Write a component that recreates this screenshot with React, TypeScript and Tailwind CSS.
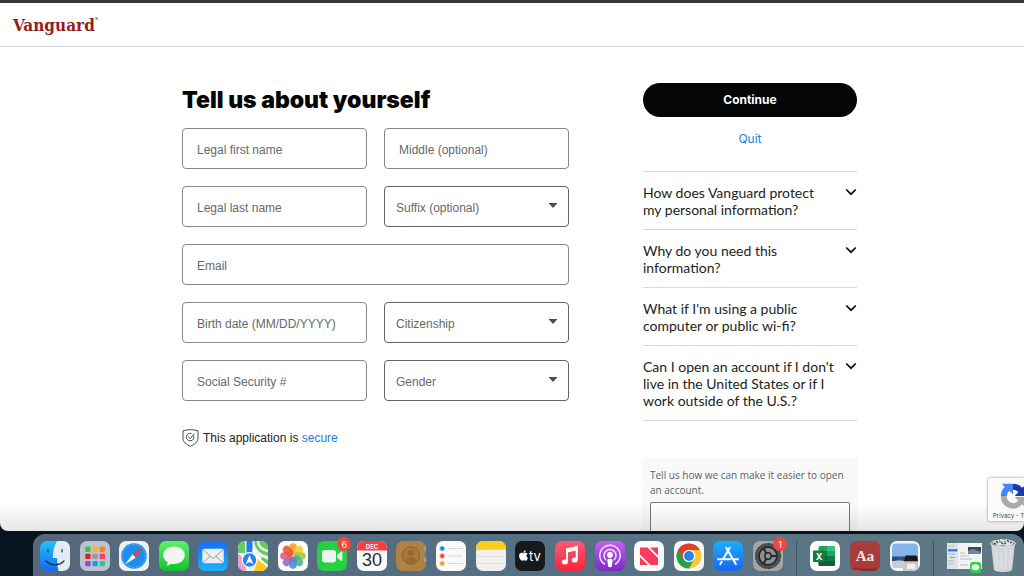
import { useState } from "react";
import type { ReactNode } from "react";
import { FaApple } from "react-icons/fa";

const questions = [
    "How does Vanguard protect my personal information?",
    "Why do you need this information?",
    "What if I'm using a public computer or public wi-fi?",
    "Can I open an account if I don't live in the United States or if I work outside of the U.S.?",
];

type FieldProps = {
    name: string;
    label: string;
    wide?: boolean;
};

const TextField = ({ name, label, wide }: FieldProps) => {
    const [value, setValue] = useState("");

    return (
        <div className={wide ? "relative col-span-2" : "relative"}>
            <input
                id={name}
                name={name}
                type="text"
                value={value}
                onChange={(e) => setValue(e.target.value)}
                className="block h-[41px] w-full rounded border border-[#85878a] bg-white px-[14px] pt-3 text-xs text-[#333] focus:outline-none"
            />
            <label
                htmlFor={name}
                className={
                    value
                        ? "absolute top-1 left-[15px] text-[9px] leading-3 text-[#66686a]"
                        : "absolute top-[14px] left-[15px] text-xs leading-4 text-[#66686a]"
                }
            >
                {label}
            </label>
        </div>
    );
};

const SelectField = ({ name, label }: FieldProps) => {
    return (
        <div className="relative">
            <select
                id={name}
                name={name}
                className="block h-[41px] w-full appearance-none rounded border border-[#606264] bg-white px-[11px] text-xs focus:outline-none"
            />
            <label
                htmlFor={name}
                className="pointer-events-none absolute top-[14px] left-3 text-xs leading-4 text-[#66686a]"
            >
                {label}
            </label>
            <svg
                viewBox="0 0 10 5"
                className="pointer-events-none absolute top-[17px] right-[11px] h-[5px] w-[10px]"
            >
                <path d="M0.5 0h9L5 5z" fill="#4a4c4e" />
            </svg>
        </div>
    );
};

const Question = ({ text }: { text: string }) => {
    const [open, setOpen] = useState(false);

    return (
        <button
            type="button"
            aria-expanded={open}
            onClick={() => setOpen(!open)}
            className="flex w-full items-start justify-between border-t border-[#d8d9da] pt-3 pb-[11px] text-left font-['Lato',sans-serif] text-sm leading-[17px] text-[#1c1e20]"
        >
            <span className="w-[192px]">{text}</span>
            <svg
                viewBox="0 0 12 8"
                className={open ? "mt-1 h-2 w-3 rotate-180" : "mt-1 h-2 w-3"}
            >
                <path
                    d="M1.2 1.5L6 6.2l4.8-4.7"
                    fill="none"
                    stroke="#0b0c0d"
                    strokeWidth="1.7"
                />
            </svg>
        </button>
    );
};

const ShieldIcon = () => (
    <svg viewBox="0 0 17 18" className="h-[18px] w-[17px]" fill="none" stroke="#45484b">
        <path d="M8.5 0.7C6 0.7 3.2 1 1 1.8v7.4c0 3.6 3.2 6.3 7.5 8 4.3-1.7 7.5-4.4 7.500-8V1.8C13.8 1 11 .7 8.5.7z" />
        <path d="M11.7 6.7a3.800 3.800 0 1 1-2.200-2.200" />
        <path d="M6.400 7.700l1.800 1.900 4.200-5" />
    </svg>
);

const RecaptchaIcon = () => (
    <svg viewBox="0 0 32 32" className="h-7 w-7">
        <path d="M16 2A14 14 0 0 1 26.5 6.700L30 3.500V16H18l4-4.200A7 7 0 0 0 16 9z" fill="#1c3aa9" />
        <path d="M2 16A14 14 0 0 1 6.500 6L3.300 2H16v12l-4.200-4A7.500 7.500 0 0 0 9 16z" fill="#4285f4" />
        <path d="M2 16a14 14 0 0 0 24.500 9.500L30 29V17H18l4 4.500a7.500 7.500 0 0 1-13-5.500z" fill="#ababab" />
    </svg>
);

type DockItem = {
    name: string;
    badge?: string;
    icon: ReactNode;
};

const petals = [
    { angle: 0, color: "#f7a21b" },
    { angle: 45, color: "#f4cf2c" },
    { angle: 90, color: "#9ccb4a" },
    { angle: 135, color: "#4fb58c" },
    { angle: 180, color: "#4f8fd0" },
    { angle: 225, color: "#8f6fc0" },
    { angle: 270, color: "#d8608c" },
    { angle: 315, color: "#f0543a" },
];

const launchColors = [
    "#2fc653", "#fdb414", "#fb8412",
    "#d3262d", "#989ba1", "#fb3e62",
    "#9a43d6", "#159cf5", "#2bca86",
];

const apps: DockItem[] = [
    {
        name: "Finder",
        icon: (
            <>
                <defs>
                    <linearGradient id="finder" x1="0" y1="0" x2="0" y2="1">
                        <stop offset="0" stopColor="#1fc4fd" />
                        <stop offset="1" stopColor="#1568ee" />
                    </linearGradient>
                </defs>
                <rect width="30" height="30" fill="url(#finder)" />
                <path d="M17 0C14 5 12.800 11 12.800 17h4.300c0 5 .400 9 1.400 13H30V0z" fill="#e4ebf3" />
                <path d="M8 8.500v2.500M22 8.500v2.500M6 20c5 5 13 5 18 0" stroke="#17324f" strokeWidth="1.200" fill="none" strokeLinecap="round" />
            </>
        ),
    },
    {
        name: "Launchpad",
        icon: (
            <>
                <rect width="30" height="30" fill="#bcc3ce" />
                {launchColors.map((color, i) => (
                    <rect
                        key={color}
                        x={5.2 + (i % 3) * 7.2}
                        y={5.5 + Math.floor(i / 3) * 7.2}
                        width="5.4"
                        height="5.4"
                        rx="1.2"
                        fill={color}
                    />
                ))}
            </>
        ),
    },
    {
        name: "Safari",
        icon: (
            <>
                <rect width="30" height="30" fill="#eef0f2" />
                <circle cx="15" cy="15" r="12.800" fill="#1f8df0" />
                <circle cx="15" cy="15" r="11.500" fill="none" stroke="#8dc8fb" strokeWidth="1.200" strokeDasharray="0.500 1.200" />
                <path d="M24 6.500L13.500 13.200l3.200 3.500z" fill="#f23c34" />
                <path d="M6 23.500l7.500-10.300 3.200 3.500z" fill="#f5f7fa" />
            </>
        ),
    },
    {
        name: "Messages",
        icon: (
            <>
                <defs>
                    <linearGradient id="messages" x1="0" y1="0" x2="0" y2="1">
                        <stop offset="0" stopColor="#5cf36b" />
                        <stop offset="1" stopColor="#10c22c" />
                    </linearGradient>
                </defs>
                <rect width="30" height="30" fill="url(#messages)" />
                <path d="M15 5.500c-6 0-10.800 3.800-10.800 8.700 0 3 1.800 5.600 4.600 7.100 0 1.300-.500 2.400-1.500 3.300 1.900 0 3.500-.700 4.700-1.900 1 .200 2 .300 3 .300 6 0 10.800-3.900 10.800-8.800S21 5.500 15 5.500z" fill="#f1f4f1" />
            </>
        ),
    },
    {
        name: "Mail",
        icon: (
            <>
                <defs>
                    <linearGradient id="mail" x1="0" y1="0" x2="0" y2="1">
                        <stop offset="0" stopColor="#1a6cf2" />
                        <stop offset="1" stopColor="#18b4fa" />
                    </linearGradient>
                </defs>
                <rect width="30" height="30" fill="url(#mail)" />
                <rect x="4.300" y="7.700" width="21.400" height="14.600" rx="1.800" fill="#eceff2" />
                <path d="M5 8.500l8.700 8.200c.800.700 1.800.700 2.600 0L25 8.500M5 21.800l7.200-6.600M25 21.800l-7.200-6.600" fill="none" stroke="#8d959d" strokeWidth="0.900" />
            </>
        ),
    },
    {
        name: "Maps",
        icon: (
            <>
                <rect width="30" height="30" fill="#f0efe9" />
                <path d="M16 0h14v15C22 13 17 8 16 0z" fill="#5fcb59" />
                <path d="M20 0c0 5 4 9 10 10" fill="none" stroke="#e8ece9" strokeWidth="2.500" />
                <path d="M0 13c5 2 8 8 8 17H0z" fill="#eb9fce" />
                <path d="M20 18l10 8v4H16z" fill="#fdc91b" />
                <path d="M24 16l6 3v7l-8-6z" fill="#61c95b" />
                <path d="M0 0h7v12H0z" fill="#65cc60" />
                <path d="M8.500 0h6v13h-6z" fill="#1e7cf2" />
                <path d="M15 9c3 7 9 12 16 17" fill="none" stroke="#fff" strokeWidth="2" />
                <circle cx="11.500" cy="19" r="7.300" fill="#2384f5" stroke="#fff" strokeWidth="1.200" />
                <path d="M11.500 14l3.800 9.200-3.800-2.200-3.800 2.200z" fill="#fff" />
            </>
        ),
    },
    {
        name: "Photos",
        icon: (
            <>
                <rect width="30" height="30" fill="#fdfdfd" />
                {petals.map((petal) => (
                    <rect
                        key={petal.angle}
                        x="11.200"
                        y="2.200"
                        width="7.600"
                        height="12"
                        rx="3.800"
                        fill={petal.color}
                        opacity="0.900"
                        transform={`rotate(${petal.angle} 15 15)`}
                    />
                ))}
            </>
        ),
    },
    {
        name: "FaceTime",
        badge: "6",
        icon: (
            <>
                <rect width="30" height="30" fill="#27cf42" />
                <rect x="5" y="9" width="14" height="12.500" rx="3" fill="#f0f4ef" />
                <path d="M20 14l4-3.300c.700-.500 1.400-.200 1.400.600v7.900c0 .800-.700 1.100-1.400.600L20 16.500z" fill="#e8efe8" />
            </>
        ),
    },
    {
        name: "Calendar",
        icon: (
            <>
                <rect width="30" height="30" fill="#fafafa" />
                <rect width="30" height="9.500" fill="#f5413d" />
                <text x="15" y="7.500" textAnchor="middle" fontSize="6" fill="#fff" className="font-['Inter',sans-serif] font-semibold">DEC</text>
                <text x="15" y="25" textAnchor="middle" fontSize="18" fill="#2c2c2e" className="font-['Liberation_Sans',sans-serif]">30</text>
            </>
        ),
    },
    {
        name: "Contacts",
        icon: (
            <>
                <rect width="30" height="30" fill="#b08142" />
                <path d="M28.500 5h1.500v5h-1.500z" fill="#9aa0a4" />
                <path d="M28.500 11h1.500v5h-1.500z" fill="#2f8fe0" />
                <path d="M28.500 17h1.500v4h-1.500z" fill="#f5a623" />
                <path d="M28.500 22h1.500v4h-1.500z" fill="#36b950" />
                <circle cx="15" cy="14.500" r="8.700" fill="#a97a3c" stroke="#866029" strokeWidth="1" />
                <circle cx="15" cy="11.800" r="3.200" fill="#986c31" />
                <path d="M9 20.500c1-3.200 3.200-4.500 6-4.500s5 1.300 6 4.500c-3.500 3-8.500 3-12 0z" fill="#986c31" />
            </>
        ),
    },
    {
        name: "Reminders",
        icon: (
            <>
                <rect width="30" height="30" fill="#fafafa" />
                <path d="M11.500 7.500h15M11.500 15h15M11.500 22.500h15" stroke="#c9cbcd" strokeWidth="0.800" />
                <circle cx="6.200" cy="7.500" r="2.400" fill="#1b7df0" stroke="#b5d4f6" strokeWidth="0.800" />
                <circle cx="6.200" cy="15" r="2.400" fill="#f0413d" stroke="#f8c0be" strokeWidth="0.800" />
                <circle cx="6.200" cy="22.500" r="2.400" fill="#f79a1c" stroke="#fadbb0" strokeWidth="0.800" />
            </>
        ),
    },
    {
        name: "Notes",
        icon: (
            <>
                <rect width="30" height="30" fill="#f2f1ef" />
                <rect width="30" height="8" fill="#fdcb1e" />
                <path d="M0 8.600h30" stroke="#b9b3a1" strokeDasharray="1 0.800" />
                <path d="M0 15.500h30M0 22.500h30" stroke="#d6d5d3" strokeWidth="0.600" />
            </>
        ),
    },
    {
        name: "TV",
        icon: (
            <>
                <rect width="30" height="30" fill="#17191b" />
                <FaApple x="2.500" y="8.500" size="12" color="#fff" />
                <text x="14" y="19.800" fontSize="13" fill="#fff" className="font-['Inter',sans-serif]">tv</text>
            </>
        ),
    },
    {
        name: "Music",
        icon: (
            <>
                <defs>
                    <linearGradient id="music" x1="0" y1="0" x2="0" y2="1">
                        <stop offset="0" stopColor="#fb5c74" />
                        <stop offset="1" stopColor="#fa233b" />
                    </linearGradient>
                </defs>
                <rect width="30" height="30" fill="url(#music)" />
                <path d="M12 20.500V8.200L21.800 6v12.500M12 10.500l9.800-2.200" fill="none" stroke="#fff" strokeWidth="2" />
                <ellipse cx="9.900" cy="21" rx="3" ry="2.500" fill="#fff" />
                <ellipse cx="19.700" cy="19" rx="3" ry="2.500" fill="#fff" />
            </>
        ),
    },
    {
        name: "Podcasts",
        icon: (
            <>
                <defs>
                    <linearGradient id="podcasts" x1="0" y1="0" x2="0" y2="1">
                        <stop offset="0" stopColor="#c95ef0" />
                        <stop offset="1" stopColor="#7a2ac4" />
                    </linearGradient>
                </defs>
                <rect width="30" height="30" fill="url(#podcasts)" />
                <path d="M9.500 23a10.200 10.200 0 1 1 11 0M10.800 18.800a6 6 0 1 1 8.400 0" fill="none" stroke="#f3e4fb" strokeWidth="1.500" strokeLinecap="round" />
                <circle cx="15" cy="14" r="2.900" fill="#fff" />
                <path d="M12.300 19.500c0-1.300 1.200-1.800 2.700-1.800s2.700.500 2.700 1.800l-.800 5.200c-.200 1-.800 1.500-1.900 1.500s-1.700-.500-1.900-1.500z" fill="#fff" />
            </>
        ),
    },
    {
        name: "News",
        icon: (
            <>
                <rect width="30" height="30" fill="#fcfcfc" />
                <path d="M6 6.500h7.500L24 17v7h-7.500L6 13.500z" fill="#fb3b5c" />
                <path d="M16 6.500h8v8zM6 16l8 8H6z" fill="#fb3b5c" />
            </>
        ),
    },
    {
        name: "Chrome",
        icon: (
            <>
                <rect width="30" height="30" fill="#f6f7f8" />
                <circle cx="15" cy="15" r="12.500" fill="#fcc934" />
                <path d="M4.200 8.700A12.500 12.500 0 0 0 15 27.500L20.400 18z" fill="#27a049" />
                <path d="M4.200 8.700L9.600 18l5.400-9h10.900A12.500 12.500 0 0 0 4.200 8.700z" fill="#e33b2e" />
                <circle cx="15" cy="15" r="6.200" fill="#fff" />
                <circle cx="15" cy="15" r="4.900" fill="#2f7de8" />
            </>
        ),
    },
    {
        name: "App Store",
        icon: (
            <>
                <defs>
                    <linearGradient id="store" x1="0" y1="0" x2="0" y2="1">
                        <stop offset="0" stopColor="#1ab0fb" />
                        <stop offset="1" stopColor="#1a66ef" />
                    </linearGradient>
                </defs>
                <rect width="30" height="30" fill="url(#store)" />
                <path d="M16.800 6.800L10.200 18M13.200 6.800l9.600 16.300M5 18.300h12.500M21.300 18.300H25M8.600 20.900l-1.300 2.200" fill="none" stroke="#fff" strokeWidth="2" strokeLinecap="round" />
            </>
        ),
    },
    {
        name: "System Preferences",
        badge: "1",
        icon: (
            <>
                <rect width="30" height="30" fill="#a3a6a8" />
                <circle cx="15" cy="15" r="12.300" fill="#55585a" stroke="#303234" strokeWidth="1.500" strokeDasharray="1.200 0.600" />
                <circle cx="15" cy="15" r="9" fill="#8d9092" stroke="#252729" strokeWidth="1.800" />
                <path d="M15 15L23.500 15M15 15L10.500 7.500M15 15l-4.500 7.500" stroke="#252729" strokeWidth="2" />
                <circle cx="15" cy="15" r="3.200" fill="#8d9092" stroke="#252729" strokeWidth="1.500" />
            </>
        ),
    },
];

const recent: DockItem[] = [
    {
        name: "Excel",
        icon: (
            <>
                <rect width="30" height="30" fill="#fbfcfb" />
                <rect x="8.500" y="5" width="16.500" height="20" rx="1.500" fill="#21a366" />
                <path d="M8.500 10H17v5H8.500z" fill="#107c41" />
                <path d="M17 5h6.500a1.500 1.500 0 0 1 1.500 1.500V10h-8z" fill="#33c481" />
                <path d="M8.500 15H25v8.500a1.500 1.500 0 0 1-1.500 1.500H10a1.500 1.500 0 0 1-1.500-1.500z" fill="#185c37" />
                <path d="M17 15h8v5h-8z" fill="#107c41" />
                <rect x="3" y="9.500" width="12" height="11.500" rx="1" fill="#107c41" />
                <text x="9" y="18.500" textAnchor="middle" fontSize="9" fill="#fff" className="font-['Inter',sans-serif] font-bold">X</text>
            </>
        ),
    },
    {
        name: "Dictionary",
        icon: (
            <>
                <rect width="30" height="30" fill="#a73c3b" />
                <path d="M0 27.500h30V30H0z" fill="#8a2e2e" />
                <path d="M3 29h7v1H3z" fill="#f23a30" />
                <text x="15" y="19.800" textAnchor="middle" fontSize="15" fill="#f3e6e4" className="font-['Liberation_Serif',serif] font-bold">Aa</text>
            </>
        ),
    },
    {
        name: "Preview",
        icon: (
            <>
                <rect width="30" height="30" fill="#f4f6f8" />
                <rect x="2" y="2.500" width="26" height="24.500" rx="4" fill="#86b5ec" />
                <path d="M2 15.500h26V20H2z" fill="#2f4c86" />
                <path d="M2 20h26v4c0 2-1.500 3-3 3H5c-2 0-3-1.500-3-3z" fill="#c3cfdb" />
                <path d="M4 20l5-1.500L14 20z" fill="#8797ab" />
                <path d="M15.500 14.500h11l1.500 6H14z" fill="#17191b" />
                <path d="M14.500 20.500h13L29 30H12.500z" fill="#c8cac9" />
                <path d="M17.500 23h7.500l.700 5h-9z" fill="#f0f1ef" />
            </>
        ),
    },
];

const DockIcon = ({ item }: { item: DockItem }) => (
    <button type="button" aria-label={item.name} className="relative size-[30px] shrink-0">
        <svg viewBox="0 0 30 30" className="size-[30px] rounded-[7px]">
            {item.icon}
        </svg>
        {item.badge && (
            <span className="absolute -top-1 -right-1 flex size-[14px] items-center justify-center rounded-full bg-[#f2453c] text-[9px] leading-none text-white">
                {item.badge}
            </span>
        )}
    </button>
);

const Dock = () => (
    <nav
        aria-label="Dock"
        className="mt-[3px] ml-[33px] flex h-[42px] gap-[13px] rounded-t-xl bg-linear-to-r from-[#56677b] via-[#557084] to-[#5f7984] px-[7px] pt-[7px]"
    >
        <div className="flex flex-1 justify-between">
            {apps.map((item) => (
                <DockIcon key={item.name} item={item} />
            ))}
        </div>
        <div className="w-px bg-[#40535f]" />
        <div className="flex gap-[10px]">
            {recent.map((item) => (
                <DockIcon key={item.name} item={item} />
            ))}
        </div>
        <div className="w-px bg-[#40535f]" />
        <div className="flex gap-[6px]">
            <button type="button" aria-label="Messages window" className="h-8 w-9">
                <svg viewBox="0 0 36 32" className="h-8 w-9">
                    <rect y="2" width="35" height="26" fill="#f3f4f5" />
                    <path d="M0 2h11v26H0z" fill="#dfe3e7" />
                    <path d="M1 8h9.500v2.500H1z" fill="#2b84f0" />
                    <path d="M1 5h6M1 13h7M1 20h7M1 23h6M13 12h5M13 15h9M13 18h12M13 24h8" stroke="#b2b8be" strokeWidth="0.900" />
                    <path d="M3 16.500h5" stroke="#ec7a7a" strokeWidth="1" />
                    <path d="M21 6h13v7H21z" fill="#394b5a" />
                    <path d="M21 10l5-2 8 3v2H21z" fill="#71889a" />
                    <rect x="23" y="21" width="11" height="11" rx="2.500" fill="#2fd34b" />
                    <ellipse cx="28.500" cy="26.200" rx="3.700" ry="3" fill="#f3f6f3" />
                </svg>
            </button>
            <button type="button" aria-label="Trash" className="-mt-1 h-9 w-7">
                <svg viewBox="0 0 28 36" className="h-9 w-7">
                    <path d="M2 6l2.800 26c.300 2 3 3 9.200 3s8.900-1 9.200-3L26 6z" fill="#d3d6d7" />
                    <path d="M7 12l1 19M12 14l.500 18M17 12l-.500 20M22 12l-1.500 18" stroke="#dee1e1" strokeWidth="1.500" />
                    <ellipse cx="14" cy="6.500" rx="12.500" ry="3.500" fill="#8b9498" stroke="#e5e8e8" strokeWidth="1" />
                    <path d="M4 6l2-3 3 1 3-2 3 1 4-1 2 2 3 1-1 3-5 1-4-1-5 1z" fill="#dfe2e2" />
                    <path d="M7 4l2 2M18 3l2 2M12 5l2 2M21 6l2-1M5 6l2 1M15 7l2-1" stroke="#3c4a50" strokeWidth="1.200" />
                    <path d="M10 4l1.500 1" stroke="#3d7fc4" strokeWidth="1.200" />
                    <path d="M15 4l1.500 1" stroke="#c9574a" strokeWidth="1.200" />
                </svg>
            </button>
        </div>
    </nav>
);

const App = () => {
    return (
        <div className="flex h-screen flex-col overflow-hidden bg-[#07131f] font-['Inter',sans-serif]">
            <div className="relative flex min-h-0 flex-1 flex-col overflow-hidden rounded-b-lg border-t-[3px] border-[#37353d] bg-white">
                <header className="flex h-11 shrink-0 items-center border-b border-[#d8d8d9] px-[13px]">
                    <a
                        href="#"
                        className="flex items-start font-['DejaVu_Serif_Condensed','DejaVu_Serif',serif] text-[17px] leading-6 font-bold text-[#981b1e]"
                    >
                        Vanguard
                        <span className="text-[4px] leading-3">®</span>
                    </a>
                </header>

                <main className="pt-9 pl-[15px]">
                    <div className="mx-auto flex max-w-[675px] justify-between">
                        <form className="w-[387px]">
                            <h1 className="pb-[11px] text-[23px] leading-[34px] font-black text-[#040505]">
                                Tell us about yourself
                            </h1>
                            <div className="grid grid-cols-2 gap-[17px] font-['Liberation_Sans',sans-serif]">
                                <TextField name="first_name" label="Legal first name" />
                                <TextField name="middle_name" label="Middle (optional)" />
                                <TextField name="last_name" label="Legal last name" />
                                <SelectField name="suffix" label="Suffix (optional)" />
                                <TextField name="email" label="Email" wide />
                                <TextField name="birth_date" label="Birth date (MM/DD/YYYY)" />
                                <SelectField name="citizenship" label="Citizenship" />
                                <TextField name="ssn" label="Social Security #" />
                                <SelectField name="gender" label="Gender" />
                            </div>
                            <p className="mt-7 flex items-center gap-1 font-['Liberation_Sans',sans-serif] text-xs text-[#1c1e20]">
                                <ShieldIcon />
                                <span>
                                    This application is{" "}
                                    <a href="#" className="text-[#1a7fd4]">
                                        secure
                                    </a>
                                </span>
                            </p>
                        </form>

                        <aside className="w-[214px]">
                            <button
                                type="button"
                                className="block h-[34px] w-full rounded-full bg-[#040505] text-xs font-bold text-white"
                            >
                                Continue
                            </button>
                            <a
                                href="#"
                                className="mt-[14px] mb-6 block text-center text-xs text-[#1a7fd4]"
                            >
                                Quit
                            </a>
                            <div className="border-b border-[#d8d9da]">
                                {questions.map((text) => (
                                    <Question key={text} text={text} />
                                ))}
                            </div>
                            <div className="mt-9 rounded bg-[#f9f9f9] px-[7px] pt-[11px] pb-4 font-['Open_Sans',sans-serif] text-[10px] leading-[15px] text-[#5c5e60] shadow-xs">
                                <label htmlFor="feedback">
                                    Tell us how we can make it easier to open an account.
                                </label>
                                <textarea
                                    id="feedback"
                                    name="feedback"
                                    className="mt-1 block h-16 w-full resize-none rounded-xs border border-[#77797b] bg-white"
                                />
                            </div>
                        </aside>
                    </div>
                </main>

                <div className="pointer-events-none absolute inset-x-0 bottom-0 h-7 bg-linear-to-b from-transparent to-black/10" />
                <div className="absolute right-0 bottom-[10px] flex h-[43px] w-9 flex-col items-start overflow-hidden rounded-l-xs bg-[#fafafa] pt-1 shadow-[0_0_3px_#888]">
                    <span className="ml-[11px]">
                        <RecaptchaIcon />
                    </span>
                    <span className="ml-[5px] text-[6px] leading-3 whitespace-nowrap text-[#444]">
                        Privacy - Terms
                    </span>
                </div>
            </div>
            <Dock />
        </div>
    );
};

export default App;
